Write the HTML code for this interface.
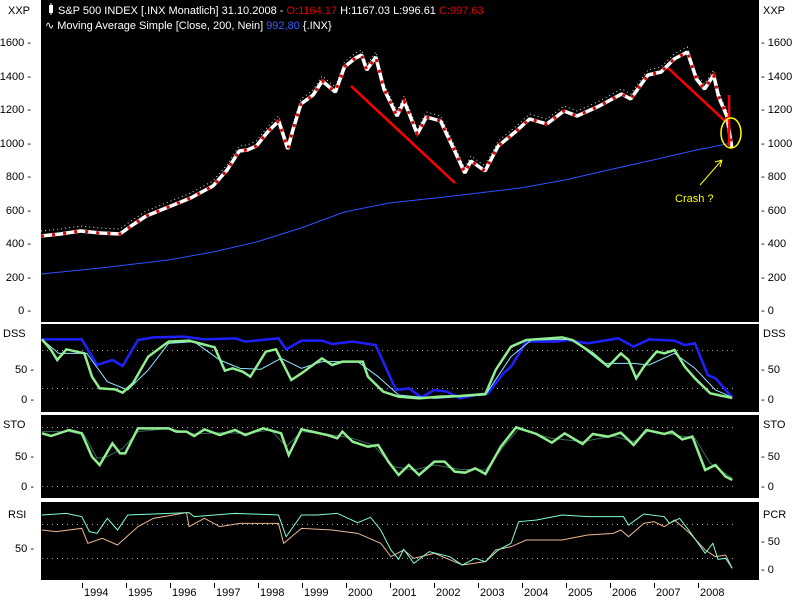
<!DOCTYPE html>
<html><head><meta charset="utf-8"><style>
body{margin:0;background:#fff;width:800px;height:600px;overflow:hidden;font-family:"Liberation Sans",sans-serif}
svg{position:absolute;left:0;top:0}
text{font-family:"Liberation Sans",sans-serif;font-size:11px}
</style></head><body>
<svg width="800" height="600" viewBox="0 0 800 600">
<rect x="41" y="0" width="718" height="322" fill="#000"/>
<rect x="41" y="324" width="718" height="88" fill="#000"/>
<rect x="41" y="415" width="718" height="83" fill="#000"/>
<rect x="41" y="502" width="718" height="78" fill="#000"/>
<g fill="#000" text-anchor="end">
<text x="30" y="14">XXP</text>
<text x="31" y="46">1600 -</text><text x="31" y="80">1400 -</text><text x="31" y="113">1200 -</text>
<text x="31" y="147">1000 -</text><text x="31" y="180">800 -</text><text x="31" y="214">600 -</text>
<text x="31" y="247">400 -</text><text x="31" y="281">200 -</text><text x="31" y="314">0 -</text>
<text x="34" y="373">50 -</text><text x="34" y="403">0 -</text>
<text x="34" y="460">50 -</text><text x="34" y="490">0 -</text>
<text x="34" y="552">50 -</text>
</g>
<g fill="#000">
<text x="3" y="337">DSS</text><text x="3" y="428">STO</text><text x="8" y="518">RSI</text>
<text x="763" y="14">XXP</text>
<text x="761" y="46">- 1600</text><text x="761" y="80">- 1400</text><text x="761" y="113">- 1200</text>
<text x="761" y="147">- 1000</text><text x="761" y="180">- 800</text><text x="761" y="214">- 600</text>
<text x="761" y="247">- 400</text><text x="761" y="281">- 200</text><text x="761" y="314">- 0</text>
<text x="763" y="337">DSS</text><text x="761" y="373">- 50</text><text x="761" y="403">- 0</text>
<text x="763" y="428">STO</text><text x="761" y="460">- 50</text><text x="761" y="490">- 0</text>
<text x="763" y="518">PCR</text><text x="761" y="545">- 50</text><text x="761" y="573">- 0</text>
</g>
<g fill="#000">
<text x="84" y="596">1994</text><text x="128" y="596">1995</text><text x="172" y="596">1996</text>
<text x="216" y="596">1997</text><text x="260" y="596">1998</text><text x="304" y="596">1999</text>
<text x="348" y="596">2000</text><text x="392" y="596">2001</text><text x="436" y="596">2002</text>
<text x="480" y="596">2003</text><text x="524" y="596">2004</text><text x="568" y="596">2005</text>
<text x="612" y="596">2006</text><text x="656" y="596">2007</text><text x="700" y="596">2008</text>
</g>
<g stroke="#000" stroke-width="1">
<path d="M82.5 583v5M126.5 583v5M170.5 583v5M214.5 583v5M258.5 583v5M302.5 583v5M346.5 583v5M390.5 583v5M434.5 583v5M478.5 583v5M522.5 583v5M566.5 583v5M610.5 583v5M654.5 583v5M698.5 583v5"/>
</g>
<g stroke="#aaa" stroke-width="1" stroke-dasharray="1 4">
<path d="M42 350.5H733M42 388.5H733M42 427.5H733M42 486.5H733M42 524.5H733M42 558.5H733"/>
</g>
<rect x="49" y="5" width="4" height="8" fill="#fff"/><path d="M51 3v12" stroke="#fff"/>
<text x="58" y="14" fill="#fff">S&amp;P 500 INDEX [.INX  Monatlich] 31.10.2008 - <tspan fill="#e00000">O:1164.17</tspan> H:1167.03 L:996.61 <tspan fill="#e00000">C:997.63</tspan></text>
<text x="45" y="29" fill="#fff">∿ Moving Average Simple [Close, 200, Nein] <tspan fill="#3c5cff">992,80</tspan> {.INX}</text>
<g transform="translate(41,0) scale(1.0115,1) translate(-41,0)">
<polyline fill="none" stroke="#3050ff" stroke-width="1" points="41,274 100,268 167,260 211,252 254,242 298,228 341,212 385,203 440,197 515,188 559,180 602,170 646,160 689,150 724,143"/>
<polyline fill="none" stroke="#ddd" stroke-width="1" stroke-dasharray="1 3" transform="translate(0,-5)" points="41,236 60,234 80,231 100,233 119,234 130,226 145,216 167,207 189,198 200,192 211,186 225,170 237,151 245,150 254,146 265,132 276,121 285,149 290,130 298,104 310,95 319,81 332,92 341,67 352,58 358,55 363,70 372,57 380,89 393,116 400,101 413,134 422,117 436,121 450,151 460,173 466,161 480,171 493,146 511,131 524,119 541,124 558,111 571,116 593,106 615,94 624,99 641,75 654,72 667,59 680,52 689,79 697,89 706,75 711,97 719,116 724,148"/>
<polyline fill="none" stroke="#fff" stroke-width="3.5" stroke-linejoin="bevel" points="41,236 60,234 80,231 100,233 119,234 130,226 145,216 167,207 189,198 200,192 211,186 225,170 237,151 245,150 254,146 265,132 276,121 285,149 290,130 298,104 310,95 319,81 332,92 341,67 352,58 358,55 363,70 372,57 380,89 393,116 400,101 413,134 422,117 436,121 450,151 460,173 466,161 480,171 493,146 511,131 524,119 541,124 558,111 571,116 593,106 615,94 624,99 641,75 654,72 667,59 680,52 689,79 697,89 706,75 711,97 719,116 724,148"/>
<polyline fill="none" stroke="#e00000" stroke-width="3" stroke-dasharray="3 8" points="41,236 60,234 80,231 100,233 119,234 130,226 145,216 167,207 189,198 200,192 211,186 225,170 237,151 245,150 254,146 265,132 276,121 285,149 290,130 298,104 310,95 319,81 332,92 341,67 352,58 358,55 363,70 372,57 380,89 393,116 400,101 413,134 422,117 436,121 450,151 460,173 466,161 480,171 493,146 511,131 524,119 541,124 558,111 571,116 593,106 615,94 624,99 641,75 654,72 667,59 680,52 689,79 697,89 706,75 711,97 719,116 724,148"/>
</g>
<path d="M351 86L455 183M668 68L726 122M729 95V146" stroke="#ff0000" stroke-width="2.5" fill="none"/>
<ellipse cx="731" cy="133" rx="10" ry="15" fill="none" stroke="#ffff00" stroke-width="1.5"/>
<path d="M700 185L722 160M722 160l-7 2M722 160l-2 7" stroke="#ffff00" stroke-width="1" fill="none"/>
<text x="675" y="202" fill="#ffff00" font-size="12">Crash ?</text>
<g transform="translate(0,310) scale(0.511,0.33333)" fill="none">
<polyline vector-effect="non-scaling-stroke" stroke="#2020ff" stroke-width="2.5" points="82,88 160,88 190,165 220,150 240,168 270,90 300,82 360,80 400,88 460,85 480,95 545,85 560,118 590,92 630,92 650,102 690,95 735,105 775,240 800,235 825,262 850,240 875,245 900,265 930,255 955,250 985,190 1000,170 1030,95 1090,95 1110,90 1150,100 1210,85 1240,110 1270,88 1320,92 1340,105 1360,100 1385,195 1400,205 1433,262"/>
<polyline vector-effect="non-scaling-stroke" stroke="#8ee6ff" stroke-width="1" points="82,88 115,130 170,130 210,215 250,240 290,180 330,100 380,95 430,150 470,175 510,178 550,145 590,175 630,155 700,155 740,200 780,255 850,265 950,255 1000,140 1040,90 1120,88 1180,160 1240,160 1270,165 1320,130 1360,175 1400,240 1433,262"/>
<polyline vector-effect="non-scaling-stroke" stroke="#90ee90" stroke-width="2.5" points="82,88 100,120 112,150 130,118 150,125 165,130 180,200 195,235 225,238 240,248 260,220 290,140 330,95 370,92 420,112 440,182 455,175 475,185 490,200 520,125 540,118 570,210 590,190 630,145 650,165 670,155 710,155 720,200 750,245 780,260 820,265 860,260 900,258 950,252 970,180 1000,110 1030,90 1100,82 1120,90 1160,130 1190,170 1215,130 1230,150 1245,205 1260,170 1285,125 1300,130 1320,120 1340,170 1360,205 1390,250 1433,264"/>
<polyline vector-effect="non-scaling-stroke" stroke="#3a6a5a" stroke-width="1" points="82,365 135,365 165,375 190,445 210,440 240,415 270,365 330,355 380,372 430,368 480,370 530,360 560,410 590,365 640,372 690,385 730,405 770,470 810,480 850,465 900,478 950,480 990,400 1015,358 1080,385 1140,395 1200,378 1240,395 1270,362 1320,375 1360,385 1390,460 1433,505"/>
<polyline vector-effect="non-scaling-stroke" stroke="#90ee90" stroke-width="2.5" points="82,370 100,378 135,360 160,370 180,440 195,465 220,400 235,430 245,430 270,355 330,355 345,365 365,365 380,378 400,358 430,375 460,360 480,375 515,355 550,370 565,435 590,358 640,375 660,385 670,365 690,395 720,410 740,405 760,455 780,495 800,465 820,495 850,455 870,455 890,485 910,488 930,475 950,492 980,410 1010,352 1050,372 1080,398 1105,370 1140,402 1160,372 1190,380 1215,368 1240,405 1265,360 1300,372 1315,365 1335,388 1355,380 1380,480 1400,465 1420,500 1433,510"/>
<polyline vector-effect="non-scaling-stroke" stroke="#e8b890" stroke-width="1" points="82,660 110,665 160,655 172,700 200,685 230,705 270,650 300,625 350,612 365,608 370,650 400,625 430,650 470,640 545,640 555,700 590,655 650,660 700,670 745,700 765,740 790,720 810,745 850,730 905,765 950,755 970,720 1000,710 1030,690 1100,690 1150,675 1200,670 1215,660 1230,680 1260,640 1280,635 1300,650 1320,630 1350,670 1380,720 1400,740 1420,735 1433,775"/>
<polyline vector-effect="non-scaling-stroke" stroke="#7fffd4" stroke-width="1" points="82,615 130,610 160,620 175,665 190,670 210,625 230,660 250,615 300,612 370,608 380,620 420,615 460,610 545,615 560,680 590,615 620,615 660,610 700,638 725,622 745,660 765,720 780,748 790,718 810,760 840,725 880,740 905,765 930,745 950,755 975,720 1000,700 1015,635 1050,630 1100,615 1150,620 1220,620 1230,645 1260,612 1300,620 1310,640 1330,625 1350,665 1380,730 1395,700 1405,748 1420,745 1433,775"/>
</g>
</svg>
</body></html>
